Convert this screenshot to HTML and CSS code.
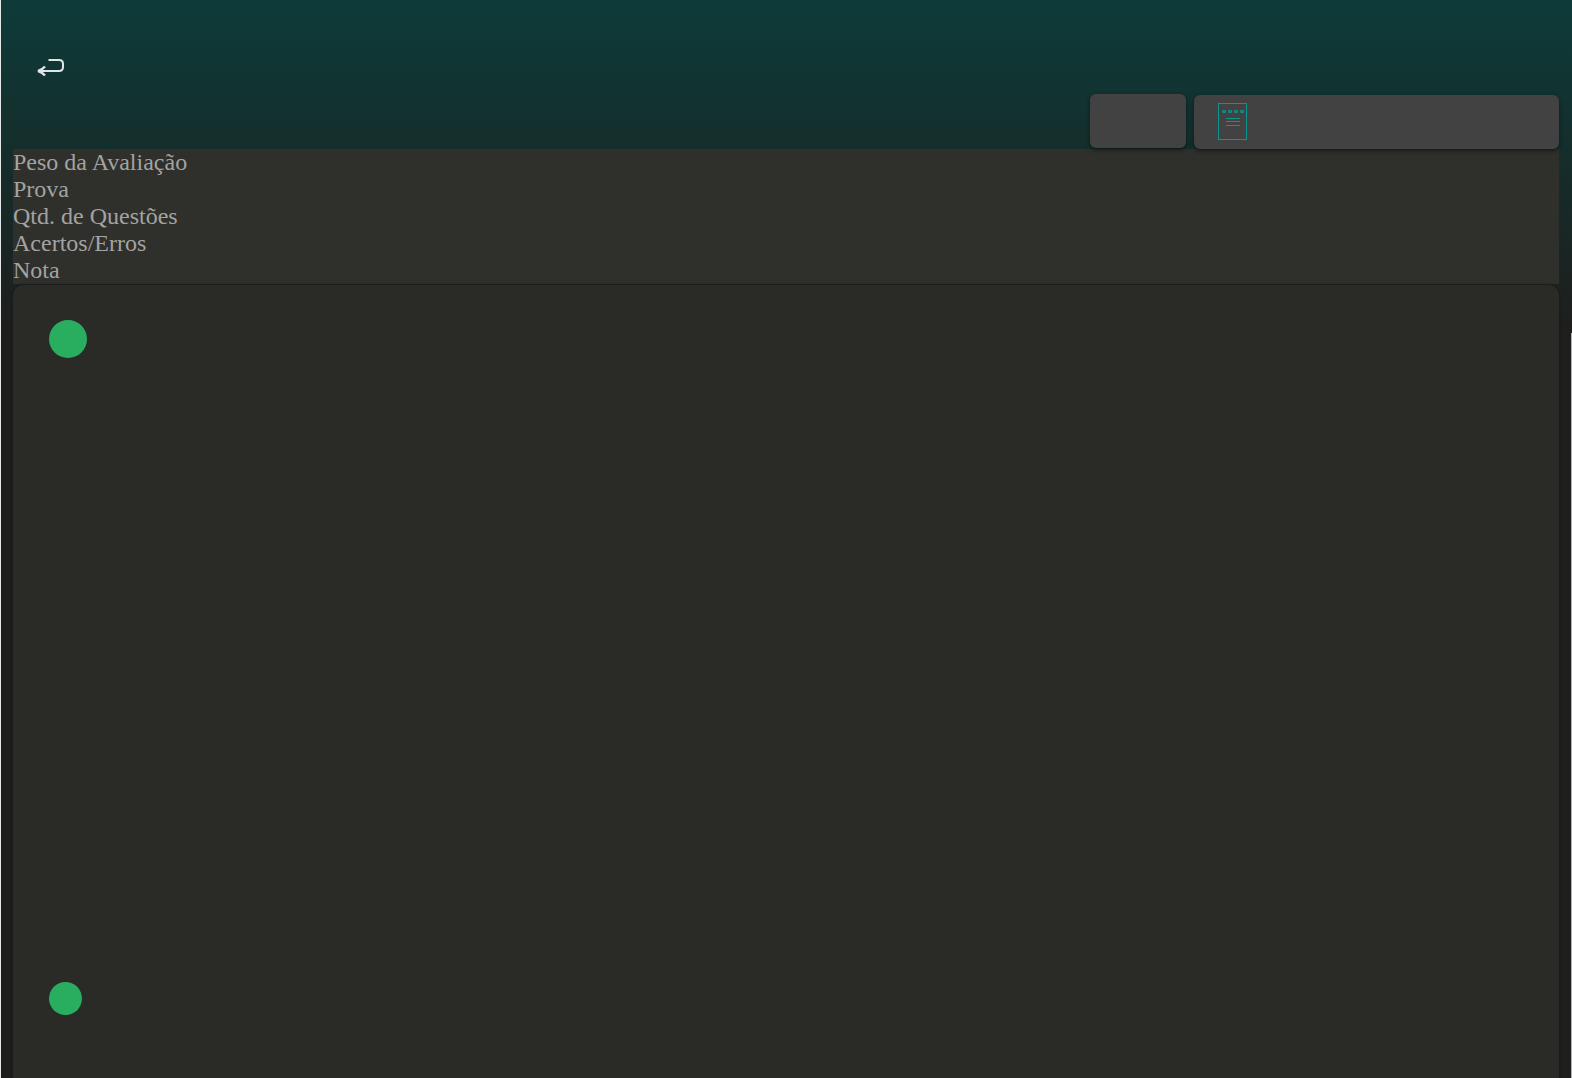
FILE: index.html
```
<!DOCTYPE html>
<html lang="pt-BR">
<head>
<meta charset="UTF-8" />
<meta name="viewport" content="width=device-width, initial-scale=1" />
<title>Avaliações</title>
<link rel="stylesheet" href="styles.css">
</head>
<body>
  <div class="page">
    <header class="top">
      <a href="#" class="back" aria-label="Voltar">
        <svg width="30" height="20" viewBox="0 0 30 20" fill="none" stroke="#dfe5e5" stroke-width="2">
          <path d="M12.5 2H23Q27 2 27 6V9Q27 13 23 13H3" />
          <path d="M9 8.5Q6 12 2 13Q6 14 9 17.5" stroke-width="2.4" />
        </svg>
      </a>
      <div class="actions">
        <button type="button" class="btn btn-small" aria-label="Filtro"></button>
        <button type="button" class="btn btn-wide" aria-label="Provas">
          <svg width="29" height="38" viewBox="0 0 29 38" fill="none" stroke="#0b9490">
            <rect x="0.5" y="0.5" width="28" height="36" />
            <g fill="#2c6e6c">
              <rect x="4.5" y="7.5" width="3" height="2" rx="0.5" />
              <rect x="10.5" y="7.5" width="3" height="2" rx="0.5" />
              <rect x="16.5" y="7.5" width="3" height="2" rx="0.5" />
              <rect x="22.5" y="7.5" width="3" height="2" rx="0.5" />
            </g>
            <path d="M8 15.5H22M8 18.5H22M8 22.5H22" />
          </svg>
        </button>
      </div>
    </header>

    <main class="content">
      <div class="labels">
        <div>Peso da Avaliação</div>
        <div>Prova</div>
        <div>Qtd. de Questões</div>
        <div>Acertos/Erros</div>
        <div>Nota</div>
      </div>
      <div class="card">
        <span class="dot"></span>
        <span class="dot dot-small"></span>
      </div>
    </main>
  </div>
</body>
</html>
```

FILE: styles.css
```
* {
  box-sizing: border-box;
}
body {
  margin: 0;
  background: #1e1e1c;
  font-family: "Liberation Serif", "Times New Roman", serif;
}
.page {
  display: flex;
  flex-direction: column;
  min-height: 100vh;
  padding: 0 13px 0 12px;
  border-left: 1px solid #e4e8e8;
  background:
    linear-gradient(#b4b4b4, #b4b4b4) right 333px / 1px 100% no-repeat,
    linear-gradient(#0d3b39, #1e1e1c 333px);
}
.top {
  display: flex;
  flex-direction: column;
  padding-top: 58px;
}
.back {
  display: flex;
  align-self: flex-start;
  margin-left: 23px;
}
.actions {
  display: flex;
  justify-content: flex-end;
  gap: 8px;
  margin-top: 16px;
}
.btn {
  position: relative;
  height: 54px;
  border: none;
  border-radius: 6px;
  background: #424242;
  box-shadow: 0 2px 4px rgba(0,0,0,0.5);
  cursor: pointer;
}
.btn-small {
  width: 96px;
}
.btn-wide {
  display: flex;
  align-items: center;
  width: 365px;
  margin-top: 1px;
  padding: 0 24px;
}
.content {
  display: flex;
  flex: 1;
  flex-direction: column;
}
.labels {
  background: #2f2f2b;
  color: #a3a3a1;
  font-size: 24px;
  line-height: 27px;
}
.card {
  display: flex;
  flex: 1;
  flex-direction: column;
  justify-content: space-between;
  margin-top: 1px;
  padding: 35px 36px 63px;
  border-radius: 10px 10px 0 0;
  background: #2a2a27;
  box-shadow: 0 0 3px rgba(0,0,0,0.3);
}
.dot {
  width: 38px;
  height: 38px;
  border-radius: 50%;
  background: #29ae60;
}
.dot-small {
  width: 33px;
  height: 33px;
}
```
